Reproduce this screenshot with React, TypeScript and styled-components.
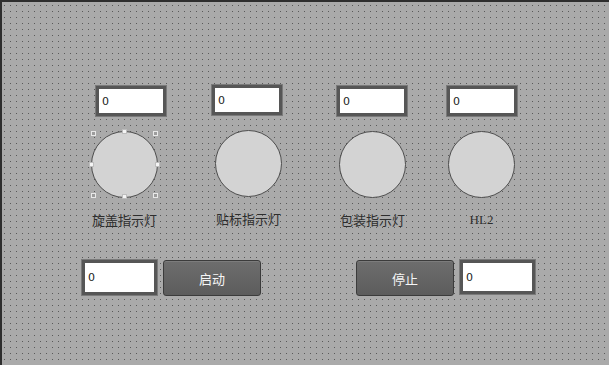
import styled, { createGlobalStyle } from "styled-components";

const GlobalStyle = createGlobalStyle`
  html, body {
    margin: 0;
    padding: 0;
    background: #aaaaaa;
  }
  * {
    box-sizing: border-box;
  }
`;

// dotted editor grid: two opaque layers leave a 1px hole every 6px
const Canvas = styled.div`
  width: 609px;
  height: 365px;
  border-top: 2px solid #2e2e2e;
  border-left: 2px solid #2e2e2e;
  background-color: #5a5a5a;
  background-image:
    linear-gradient(to right, transparent 1px, #aaaaaa 1px),
    linear-gradient(to bottom, transparent 1px, #aaaaaa 1px);
  background-size: 6px 6px;
  background-position: 2px 3px;
  font-family: "Noto Sans CJK SC", "Noto Sans", sans-serif;
  padding-top: 84px;
  display: flex;
  flex-direction: column;
`;

const LampRow = styled.div`
  display: flex;
  align-items: flex-start;
`;

const Lamp = styled.div<{ $left: number; $top?: number }>`
  display: flex;
  flex-direction: column;
  align-items: center;
  width: 89px;
  margin-left: ${p => p.$left}px;
  margin-top: ${p => p.$top ?? 0}px;
`;

const ValueBox = styled.div<{ $w: number; $h: number; $inset?: number }>`
  width: ${p => p.$w}px;
  height: ${p => p.$h}px;
  border: 3px solid #565656;
  outline: 1px solid #7a7a7a;
  background: #ffffff;
  color: #222;
  font-family: "DejaVu Sans", sans-serif;
  font-size: 11px;
  line-height: 1;
  display: flex;
  align-items: center;
  padding-left: 3px;
  ${p => p.$inset !== undefined && `align-self: flex-start; margin-left: ${p.$inset}px;`}
`;

const Light = styled.div`
  position: relative;
  width: 67px;
  height: 67px;
  border-radius: 50%;
  background: #d3d3d3;
  border: 1px solid #4e4e4e;
  margin-top: 15px;
`;

const Handle = styled.span<{ $x: number; $y: number; $corner?: boolean }>`
  position: absolute;
  width: 5px;
  height: 5px;
  left: ${p => p.$x}px;
  top: ${p => p.$y}px;
  background: ${p => (p.$corner ? "#9c9c9c" : "#f4f4f4")};
  border: 1px solid ${p => (p.$corner ? "#e8e8e8" : "#bdbdbd")};
`;

const Caption = styled.div<{ $serif?: boolean }>`
  margin-top: 14px;
  font-size: 13px;
  line-height: 16px;
  color: #2e2e2e;
  font-family: ${p =>
    p.$serif
      ? `"Liberation Serif", serif`
      : `"Noto Sans CJK SC", "Noto Sans", sans-serif`};
  white-space: nowrap;
`;

const ControlRow = styled.div`
  display: flex;
  align-items: flex-start;
  margin-top: 32px;
  padding-left: 80px;
`;

const Group = styled.div<{ $left?: number }>`
  display: flex;
  gap: 6px;
  margin-left: ${p => p.$left ?? 0}px;
`;

const PushButton = styled.button`
  width: 98px;
  height: 36px;
  border: 1px solid #3b3b3b;
  border-radius: 3px;
  background: linear-gradient(#6d6d6d, #5c5c5c);
  box-shadow: inset 0 1px 0 #7c7c7c;
  color: #f6f6f6;
  font-family: "Noto Sans CJK SC", "Noto Sans", sans-serif;
  font-size: 13px;
  padding: 0;
`;

const lamps = [
  { name: "旋盖指示灯", left: 78, top: 0, inset: 16, selected: true },
  { name: "贴标指示灯", left: 35, top: -1, inset: 8 },
  { name: "包装指示灯", left: 35, top: 0, inset: 9 },
  { name: "HL2", left: 20, top: 0, inset: 10, serif: true },
];

function App() {
  return (
    <>
      <GlobalStyle />
      <Canvas>
        <LampRow>
          {lamps.map(l => (
            <Lamp key={l.name} $left={l.left} $top={l.top}>
              <ValueBox $w={70} $h={30} $inset={l.inset}>0</ValueBox>
              <Light>
                {l.selected && (
                  <>
                    <Handle $x={-1} $y={-1} $corner />
                    <Handle $x={30} $y={-3} />
                    <Handle $x={61} $y={-1} $corner />
                    <Handle $x={-3} $y={30} />
                    <Handle $x={63} $y={30} />
                    <Handle $x={-1} $y={61} $corner />
                    <Handle $x={30} $y={62} />
                    <Handle $x={61} $y={61} $corner />
                  </>
                )}
              </Light>
              <Caption $serif={l.serif}>{l.name}</Caption>
            </Lamp>
          ))}
        </LampRow>
        <ControlRow>
          <Group>
            <ValueBox $w={75} $h={35}>0</ValueBox>
            <PushButton>启动</PushButton>
          </Group>
          <Group $left={95}>
            <PushButton>停止</PushButton>
            <ValueBox $w={75} $h={34}>0</ValueBox>
          </Group>
        </ControlRow>
      </Canvas>
    </>
  );
}

export default App;
